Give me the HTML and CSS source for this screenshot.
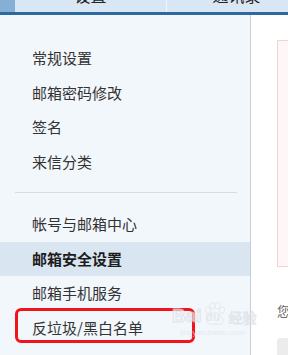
FILE: index.html
```html
<!DOCTYPE html>
<html lang="zh">
<head>
<meta charset="utf-8">
<link rel="stylesheet" href="styles.css">
</head>
<body>
<div class="page">
  <div class="topbar">
    <div class="tb-lead"></div>
    <div class="tb-tab tb-first"><span class="tb-text">设置</span></div>
    <div class="tb-tab"><span class="tb-text">通讯录</span></div>
  </div>
  <div class="body">
    <nav class="sidebar">
      <ul class="group group-first">
        <li class="item">常规设置</li>
        <li class="item">邮箱密码修改</li>
        <li class="item">签名</li>
        <li class="item">来信分类</li>
      </ul>
      <div class="sep"></div>
      <ul class="group">
        <li class="item">帐号与邮箱中心</li>
        <li class="item item-active">邮箱安全设置</li>
        <li class="item">邮箱手机服务</li>
        <li class="item">反垃圾/黑白名单</li>
      </ul>
    </nav>
    <main class="main">
      <div class="notice"></div>
      <p class="hint">您</p>
      <div class="graybox"></div>
    </main>
  </div>
  <div class="mark"></div>
  <div class="watermark">
    <div class="wm-row">
      <span class="wm-bai">Bai</span>
      <span class="wm-paw">
        <svg class="wm-svg" viewBox="0 0 22 24" width="22" height="24">
          <ellipse cx="4" cy="8" rx="2.6" ry="3.2"/>
          <ellipse cx="8.5" cy="3.8" rx="2.6" ry="3.2"/>
          <ellipse cx="13.5" cy="3.8" rx="2.6" ry="3.2"/>
          <ellipse cx="18" cy="8" rx="2.6" ry="3.2"/>
          <path d="M11 11 C6 11 2 17 3 20 C4 23 8 22 11 22 C14 22 18 23 19 20 C20 17 16 11 11 11 Z"/>
        </svg>
        <span class="wm-du">du</span>
      </span>
      <span class="wm-jy">经验</span>
    </div>
    <div class="wm-url">jingyan.baidu.com</div>
  </div>
</div>
</body>
</html>
```
FILE: styles.css
```css
html, body {
  margin: 0;
  padding: 0;
}
body {
  width: 288px;
  height: 355px;
  overflow: hidden;
  background: #ffffff;
  font-family: "Noto Sans CJK SC", "Noto Sans", sans-serif;
}
.page {
  position: relative;
  width: 288px;
  height: 355px;
  display: flex;
  flex-direction: column;
}
.topbar {
  height: 12px;
  display: flex;
  background: #d9e6f4;
  border-bottom: 3px solid #2d699f;
  overflow: hidden;
  flex: none;
}
.tb-lead {
  width: 15px;
  background: #86afd6;
  flex: none;
}
.tb-tab {
  width: 139px;
  flex: none;
  display: flex;
  justify-content: center;
  align-items: flex-start;
  overflow: hidden;
}
.tb-first {
  width: 151px;
  border-right: 1px solid #f1f6fb;
}
.tb-text {
  font-size: 16px;
  line-height: 16px;
  color: #222;
  margin-top: -13px;
}
.body {
  flex: 1;
  display: flex;
  min-height: 0;
}
.sidebar {
  width: 250px;
  flex: none;
  background: #f2f7fc;
  border-right: 1px solid #c6ced8;
  padding-top: 26px;
  box-sizing: content-box;
}
.group {
  list-style: none;
  margin: 0;
  padding: 0;
}
.item {
  height: 34.5px;
  line-height: 34.5px;
  padding-left: 32px;
  font-size: 15px;
  color: #333;
  white-space: nowrap;
}
.item-active {
  background: #d9e6f2;
  color: #1c1c1c;
  font-weight: bold;
}
.sep {
  height: 1px;
  background: #d6dce2;
  margin: 13px 13px 14px 15px;
}
.main {
  flex: 1;
  padding-left: 26px;
  padding-top: 25px;
  min-width: 0;
  display: flex;
  flex-direction: column;
}
.notice {
  height: 225px;
  border: 1px solid #f1d3d7;
  border-right: none;
  background: #fff6f7;
  flex: none;
}
.hint {
  margin: 36px 0 0 0;
  font-size: 13px;
  line-height: 16px;
  color: #666;
}
.graybox {
  margin-top: 19px;
  height: 20px;
  background: #ececec;
  border-radius: 3px 0 0 0;
  flex: none;
}
.mark {
  position: absolute;
  left: 15px;
  top: 308px;
  width: 174px;
  height: 29px;
  border: 3px solid #f2141a;
  border-radius: 6px;
}
.watermark {
  position: absolute;
  left: 172px;
  top: 296px;
  opacity: 0.7;
}
.wm-row {
  display: flex;
  align-items: flex-end;
  height: 30px;
}
.wm-bai {
  font-family: "Liberation Sans", sans-serif;
  font-size: 19px;
  line-height: 20px;
  font-weight: bold;
  color: #f5f7fa;
  -webkit-text-stroke: 1px #d9dee4;
}
.wm-paw {
  position: relative;
  width: 22px;
  height: 28px;
  margin-left: 2px;
}
.wm-svg {
  position: absolute;
  left: 0;
  top: 4px;
  fill: #f5f7fa;
  stroke: #d9dee4;
  stroke-width: 0.8;
}
.wm-du {
  position: absolute;
  left: 2px;
  top: 13px;
  font-family: "Liberation Sans", sans-serif;
  font-size: 12px;
  line-height: 12px;
  font-weight: bold;
  color: #dde2e8;
}
.wm-jy {
  font-size: 14px;
  line-height: 18px;
  margin-left: 3px;
  color: #f5f7fa;
  -webkit-text-stroke: 0.8px #d9dee4;
}
.wm-url {
  font-family: "Liberation Sans", sans-serif;
  font-size: 8px;
  line-height: 10px;
  margin-left: 8px;
  margin-top: 2px;
  color: #e1e5ea;
}
```
